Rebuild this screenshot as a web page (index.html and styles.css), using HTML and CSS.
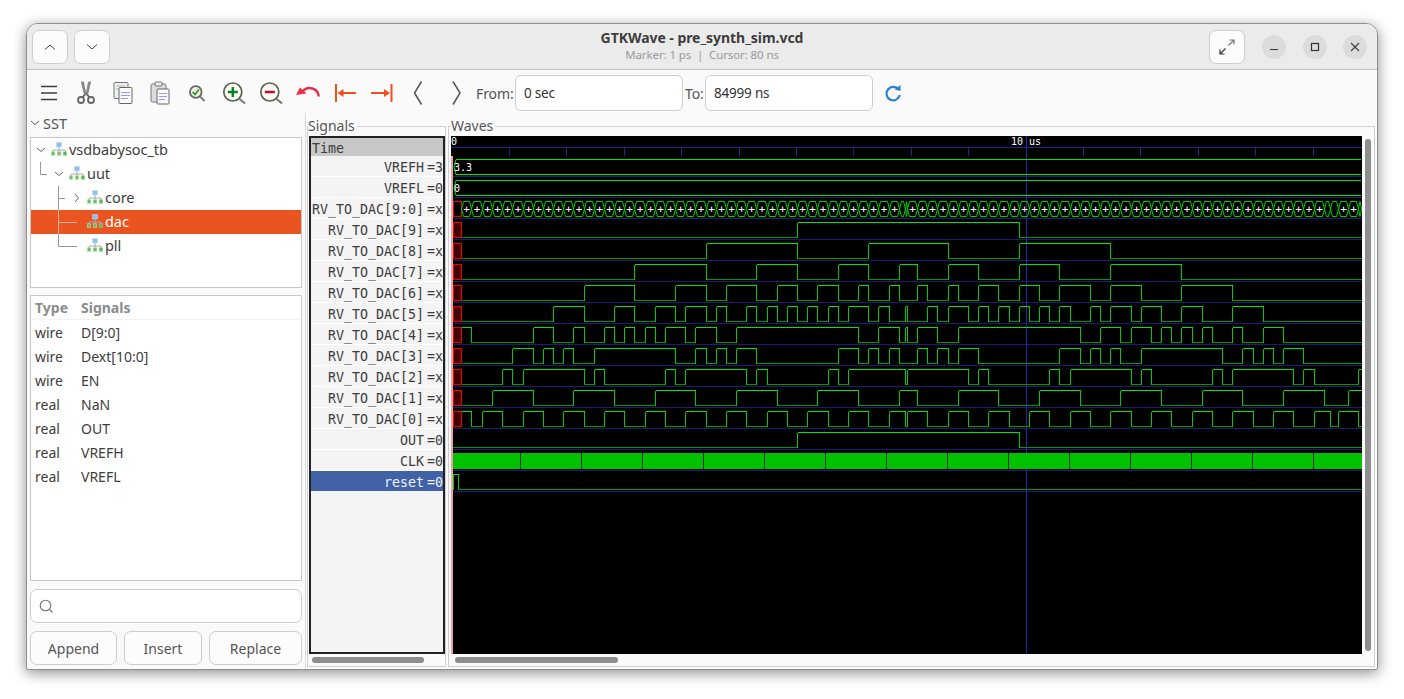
FILE: index.html
```html
<!DOCTYPE html>
<html lang="en">
<head>
  <meta charset="UTF-8" />
  <title>GTKWave - pre_synth_sim.vcd</title>
  <link rel="stylesheet" href="styles.css">
</head>
<body>
<svg class="defs" width="0" height="0">
  <symbol id="hier" viewBox="0 0 16 14">
    <path d="M8 5v3M2 10V8h12v2M8 8v2" stroke="#aaa" fill="none"/>
    <rect x="5.500" y="0.500" width="5" height="4.500" fill="#8fbdf0" stroke="#c4dcf6" stroke-width=".6"/>
    <rect x="0.300" y="9.800" width="3.500" height="3.500" fill="#6cbf64" stroke="#b4dfae" stroke-width=".6"/>
    <rect x="6.300" y="9.800" width="3.500" height="3.500" fill="#6cbf64" stroke="#b4dfae" stroke-width=".6"/>
    <rect x="12.200" y="9.800" width="3.500" height="3.500" fill="#5cb558" stroke="#a4d8a0" stroke-width=".6"/>
  </symbol>
</svg>
<div class="window">
  <div class="titlebar">
    <div class="title-side">
      <button class="head-btn"><svg width="12" height="8" viewBox="0 0 12 8"><path d="M1 6.5l5-4.500 5 4.500" fill="none" stroke="#444"/></svg></button>
      <button class="head-btn"><svg width="12" height="8" viewBox="0 0 12 8"><path d="M1 1.500l5 4.500 5-4.500" fill="none" stroke="#444"/></svg></button>
    </div>
    <div class="title-text">
      <div class="title-main">GTKWave - pre_synth_sim.vcd</div>
      <div class="title-sub">Marker: 1 ps &nbsp;|&nbsp; Cursor: 80 ns</div>
    </div>
    <div class="title-side title-right">
      <button class="head-btn expand-btn"><svg width="16" height="16" viewBox="0 0 16 16"><path d="M9.500 6.500L15 1M10.500 1H15v4.500" fill="none" stroke="#777" stroke-width="1.200"/><path d="M6.500 9.500L1 15M1 10.500V15h4.500" fill="none" stroke="#333" stroke-width="1.200"/></svg></button>
      <div class="win-ctl"><svg width="10" height="10" viewBox="0 0 10 10"><path d="M1 7.500h8" stroke="#333" stroke-width="1.200"/></svg></div>
      <div class="win-ctl"><svg width="10" height="10" viewBox="0 0 10 10"><rect x="1.500" y="1.500" width="7" height="7" fill="none" stroke="#333" stroke-width="1.200"/></svg></div>
      <div class="win-ctl win-close"><svg width="10" height="10" viewBox="0 0 10 10"><path d="M1 1l8 8M9 1l-8 8" stroke="#444" stroke-width="1.200"/></svg></div>
    </div>
  </div>

  <div class="toolbar">
    <div class="tool"><svg width="24" height="24" viewBox="0 0 24 24"><path d="M4 5.500h16M4 12h16M4 18.500h16" stroke="#3d3d3d" stroke-width="1.500"/></svg></div>
    <div class="tool"><svg width="24" height="24" viewBox="0 0 24 24"><path d="M7.500 1l3 13 1.500 0-2.500-13zM16.500 1l-3 13-1.500 0 2.500-13z" fill="#999" stroke="#666" stroke-width=".7"/><path d="M10.500 14L8.500 16.500M13.500 14l2 2.500" stroke="#555" stroke-width="1.800"/><circle cx="7" cy="19" r="3" fill="none" stroke="#666" stroke-width="1.800"/><circle cx="17" cy="19" r="3" fill="none" stroke="#666" stroke-width="1.800"/></svg></div>
    <div class="tool"><svg width="24" height="24" viewBox="0 0 24 24"><rect x="3" y="1.500" width="14" height="16" rx="1" fill="#eee" stroke="#777"/><path d="M5 5h9M5 8h9" stroke="#bbb"/><rect x="8" y="6.500" width="13" height="16" rx="1" fill="#fbfbfb" stroke="#666"/><path d="M10 11.500h9M10 14.500h9M10 17.500h7" stroke="#9a9ae6"/></svg></div>
    <div class="tool"><svg width="24" height="24" viewBox="0 0 24 24"><rect x="3" y="3" width="15" height="18" rx="1.500" fill="#ddd" stroke="#777"/><rect x="7" y="1" width="7" height="4" rx="1" fill="#eee" stroke="#777"/><rect x="9" y="8" width="12" height="15" rx="1" fill="#fbfbfb" stroke="#666"/><path d="M11 12.500h8M11 15.500h8M11 18.500h6" stroke="#9a9ae6"/></svg></div>
    <div class="tool"><svg width="24" height="24" viewBox="0 0 24 24"><circle cx="10.800" cy="11" r="5.800" fill="#eef0e4" stroke="#666" stroke-width="1.800"/><path d="M15 15.500l4.500 4.500" stroke="#777" stroke-width="1.800"/><path d="M7.500 11l2.500 2.500 4-5" fill="none" stroke="#2a9a2a" stroke-width="1.700"/></svg></div>
    <div class="tool"><svg width="24" height="24" viewBox="0 0 24 24"><circle cx="10.800" cy="11" r="9" fill="#fbfbf6" stroke="#5f5f50" stroke-width="1.700"/><path d="M17 17.500l6 5" stroke="#777" stroke-width="2"/><path d="M10.800 6v10M5.800 11h10" stroke="#0a8020" stroke-width="2.400"/></svg></div>
    <div class="tool"><svg width="24" height="24" viewBox="0 0 24 24"><circle cx="10.800" cy="11" r="9" fill="#fbfbf6" stroke="#5f5f50" stroke-width="1.700"/><path d="M17 17.500l6 5" stroke="#777" stroke-width="2"/><path d="M5.800 11h10" stroke="#c0102c" stroke-width="2.400"/></svg></div>
    <div class="tool"><svg width="24" height="24" viewBox="0 0 24 24"><path d="M22.800 15.500A9.200 9.200 0 0 0 6.500 10.500" fill="none" stroke="#e8304a" stroke-width="2.400"/><path d="M0 14l4-7.500 6.500 6z" fill="#e8304a"/></svg></div>
    <div class="tool"><svg width="24" height="24" viewBox="0 0 24 24"><path d="M3 3v18" stroke="#f0501e" stroke-width="2"/><path d="M8 12h15" stroke="#f0501e" stroke-width="2"/><path d="M4.500 12l6-4v8z" fill="#f0501e"/></svg></div>
    <div class="tool"><svg width="24" height="24" viewBox="0 0 24 24"><path d="M21.500 3v18" stroke="#f0501e" stroke-width="2"/><path d="M1 12h15" stroke="#f0501e" stroke-width="2"/><path d="M20 12l-6-4v8z" fill="#f0501e"/></svg></div>
    <div class="tool"><svg width="24" height="24" viewBox="0 0 24 24"><path d="M14.500 .5L7.500 12l7 11.500" fill="none" stroke="#555" stroke-width="1.500"/></svg></div>
    <div class="tool"><svg width="24" height="24" viewBox="0 0 24 24"><path d="M9 .5L16 12 9 23.500" fill="none" stroke="#555" stroke-width="1.500"/></svg></div>
    <span class="range-label from-label">From:</span>
    <div class="range-input">0 sec</div>
    <span class="range-label to-label">To:</span>
    <div class="range-input">84999 ns</div>
    <div class="tool reload"><svg width="24" height="24" viewBox="0 0 24 24"><path d="M17.500 8.500A6.700 6.700 0 1 0 18.800 14" fill="none" stroke="#2a7fd0" stroke-width="2.200"/><path d="M13.500 8.500L19.500 4v6z" fill="#2a7fd0"/></svg></div>
  </div>

  <div class="panes">
    <div class="left-col">
      <div class="sst-head"><svg width="10" height="8" viewBox="0 0 10 8"><path d="M1 2l4 3.500L9 2" fill="none" stroke="#555"/></svg><span>SST</span></div>
      <div class="tree">
        <div class="tree-row">
          <svg class="gutter" width="20" height="24"><path d="M6 10l4 3.500 4-3.500" fill="none" stroke="#666"/></svg>
          <svg class="hier" width="16" height="14"><use href="#hier"/></svg><span>vsdbabysoc_tb</span>
        </div>
        <div class="tree-row">
          <svg class="gutter" width="38" height="24"><path d="M9.500 0v12.500H16" fill="none" stroke="#999"/><path d="M24 10l4 3.500 4-3.500" fill="none" stroke="#666"/></svg>
          <svg class="hier" width="16" height="14"><use href="#hier"/></svg><span>uut</span>
        </div>
        <div class="tree-row">
          <svg class="gutter" width="56" height="24"><path d="M27.500 0v24M27.500 12.500H34" fill="none" stroke="#999"/><path d="M44 8l3.500 4-3.500 4" fill="none" stroke="#666"/></svg>
          <svg class="hier" width="16" height="14"><use href="#hier"/></svg><span>core</span>
        </div>
        <div class="tree-row selected">
          <svg class="gutter" width="56" height="24"><path d="M27.500 0v24M27.500 12.500H46" fill="none" stroke="#f2b49c"/></svg>
          <svg class="hier" width="16" height="14"><use href="#hier"/></svg><span>dac</span>
        </div>
        <div class="tree-row">
          <svg class="gutter" width="56" height="24"><path d="M27.500 0v12.500H46" fill="none" stroke="#999"/></svg>
          <svg class="hier" width="16" height="14"><use href="#hier"/></svg><span>pll</span>
        </div>
      </div>

      <div class="sig-table">
        <div class="sig-table-head"><span>Type</span><span>Signals</span></div>
        <div class="sig-table-row"><span>wire</span><span>D[9:0]</span></div>
        <div class="sig-table-row"><span>wire</span><span>Dext[10:0]</span></div>
        <div class="sig-table-row"><span>wire</span><span>EN</span></div>
        <div class="sig-table-row"><span>real</span><span>NaN</span></div>
        <div class="sig-table-row"><span>real</span><span>OUT</span></div>
        <div class="sig-table-row"><span>real</span><span>VREFH</span></div>
        <div class="sig-table-row"><span>real</span><span>VREFL</span></div>
      </div>

      <div class="search"><svg width="15" height="15" viewBox="0 0 15 15"><circle cx="6.500" cy="6.500" r="5.300" fill="none" stroke="#777" stroke-width="1.100"/><path d="M10.500 10.500l3 3" stroke="#777" stroke-width="1.100"/></svg></div>
      <div class="action-row">
        <button class="action append">Append</button>
        <button class="action insert">Insert</button>
        <button class="action replace">Replace</button>
      </div>
    </div>

    <div class="pane-sep"></div>

    <div class="frame signals-frame">
      <span class="legend">Signals</span>
      <div class="sig-list">
        <div class="sig-time">Time</div>
        <div class="sig-row"><span>VREFH</span><span>=3</span></div>
        <div class="sig-row"><span>VREFL</span><span>=0</span></div>
        <div class="sig-row"><span>RV_TO_DAC[9:0]</span><span>=x</span></div>
        <div class="sig-row"><span>RV_TO_DAC[9]</span><span>=x</span></div>
        <div class="sig-row"><span>RV_TO_DAC[8]</span><span>=x</span></div>
        <div class="sig-row"><span>RV_TO_DAC[7]</span><span>=x</span></div>
        <div class="sig-row"><span>RV_TO_DAC[6]</span><span>=x</span></div>
        <div class="sig-row"><span>RV_TO_DAC[5]</span><span>=x</span></div>
        <div class="sig-row"><span>RV_TO_DAC[4]</span><span>=x</span></div>
        <div class="sig-row"><span>RV_TO_DAC[3]</span><span>=x</span></div>
        <div class="sig-row"><span>RV_TO_DAC[2]</span><span>=x</span></div>
        <div class="sig-row"><span>RV_TO_DAC[1]</span><span>=x</span></div>
        <div class="sig-row"><span>RV_TO_DAC[0]</span><span>=x</span></div>
        <div class="sig-row"><span>OUT</span><span>=0</span></div>
        <div class="sig-row"><span>CLK</span><span>=0</span></div>
        <div class="sig-row active"><span>reset</span><span>=0</span></div>
      </div>
      <div class="hscroll signals-scroll"></div>
    </div>

    <div class="frame waves-frame">
      <span class="legend">Waves</span>
      <div class="waves-main">
        <svg id="waves" class="waves" width="911" height="518" viewBox="451 136 911 518">
          <text class="wave-text" x="451" y="145">0</text>
          <text class="wave-text" x="1011" y="145">10 us</text>
          <text class="wave-text" x="454" y="171">3.3</text>
          <text class="wave-text" x="454" y="192">0</text>
        </svg>
        <div class="vscroll"></div>
      </div>
      <div class="hscroll waves-scroll"></div>
    </div>
  </div>
</div>
<script src="waves.js"></script>
</body>
</html>
```

FILE: styles.css
```css
* {
  box-sizing: border-box;
}
html, body {
  height: 100%;
}
body {
  margin: 0;
  padding: 23px 26px 29px;
  background-color: #fff;
  font-family: 'Noto Sans', sans-serif;
  font-size: 14px;
  color: #3d3d3d;
  overflow: hidden;
}
.defs {
  display: block;
  height: 0;
}
.window {
  display: flex;
  flex-direction: column;
  height: 647px;
  background-color: #fafafa;
  border: 1px solid #8f8f8f;
  border-radius: 12px 12px 2px 2px;
  box-shadow: 0 3px 14px rgba(0, 0, 0, 0.45);
  overflow: hidden;
}
button {
  font-family: inherit;
  color: inherit;
}

/* Title bar */
.titlebar {
  display: flex;
  align-items: center;
  flex: none;
  height: 46px;
  padding: 0 10px 0 5px;
  background-color: #ebebeb;
  border-bottom: 1px solid #c0c0c0;
}
.title-side {
  display: flex;
  align-items: center;
  flex: 1;
  gap: 6px;
}
.title-right {
  justify-content: flex-end;
  gap: 17px;
}
.head-btn {
  display: flex;
  align-items: center;
  justify-content: center;
  width: 36px;
  height: 34px;
  padding: 0;
  background-color: #fcfcfc;
  border: 1px solid #cdcdcd;
  border-radius: 7px;
}
.title-text {
  margin: -2px 0 0 5px;
  text-align: center;
  line-height: 1;
}
.title-main {
  font-size: 14px;
  font-weight: 700;
  letter-spacing: -0.05px;
  margin-bottom: 4px;
}
.title-sub {
  font-size: 11.500px;
  color: #999;
  letter-spacing: -0.1px;
}
.win-ctl {
  display: flex;
  align-items: center;
  justify-content: center;
  width: 24px;
  height: 24px;
  background-color: #dcdcdc;
  border-radius: 50%;
}
.win-close {
  margin-left: -1px;
}

/* Toolbar */
.toolbar {
  display: flex;
  align-items: center;
  flex: none;
  height: 43px;
  padding: 3px 0 0 3px;
  background-color: #fafafa;
}
.tool {
  display: flex;
  align-items: center;
  justify-content: center;
  width: 37px;
  height: 24px;
}
.reload {
  margin-left: 1px;
  width: 38px;
}
.range-label {
  color: #555;
  font-size: 14px;
  letter-spacing: -0.1px;
}
.from-label {
  width: 41px;
  padding-left: 2px;
}
.to-label {
  width: 22px;
  padding-left: 2px;
}
.range-input {
  width: 168px;
  height: 36px;
  padding-left: 8px;
  line-height: 34px;
  font-size: 13.500px;
  letter-spacing: -0.2px;
  color: #333;
  background-color: #fff;
  border: 1px solid #cdcdcd;
  border-radius: 6px;
}

/* Panes */
.panes {
  display: flex;
  flex: 1;
  min-height: 0;
  padding-left: 3px;
}
.left-col {
  display: flex;
  flex-direction: column;
  flex: none;
  width: 272px;
}
.sst-head {
  display: flex;
  align-items: center;
  gap: 3px;
  height: 24px;
  padding-bottom: 4px;
  font-size: 14.500px;
  color: #555;
}
.tree {
  height: 151px;
  background-color: #fff;
  border: 1px solid #c8c8c8;
}
.tree-row {
  display: flex;
  align-items: center;
  height: 24px;
  font-size: 14.500px;
  letter-spacing: -0.05px;
}
.tree-row span {
  margin: -2px 0 0 2px;
}
.tree-row.selected {
  background-color: #e95420;
  color: #fff;
}
.gutter {
  flex: none;
}
.hier {
  flex: none;
  margin-top: -2px;
}
.sig-table {
  height: 286px;
  margin-top: 7px;
  background-color: #fff;
  border: 1px solid #c8c8c8;
}
.sig-table-head, .sig-table-row {
  display: flex;
  align-items: center;
  height: 24px;
  padding-left: 4px;
  font-size: 14px;
}
.sig-table-row span {
  margin-top: -2px;
}
.sig-table-head {
  margin-bottom: 1px;
  font-weight: 700;
  color: #8c8c8c;
  border-bottom: 1px solid #f2f2f2;
}
.sig-table-head span:first-child, .sig-table-row span:first-child {
  width: 46px;
}
.search {
  display: flex;
  align-items: center;
  height: 34px;
  margin-top: 8px;
  padding-left: 8px;
  background-color: #fff;
  border: 1px solid #cdcdcd;
  border-radius: 7px;
}
.action-row {
  display: flex;
  gap: 7px;
  margin-top: 8px;
}
.action {
  height: 34px;
  padding: 0;
  font-size: 14px;
  color: #555;
  background-color: #fcfcfc;
  border: 1px solid #cdcdcd;
  border-radius: 7px;
}
.append {
  width: 87px;
}
.insert {
  width: 78px;
}
.replace {
  width: 93px;
}
.pane-sep {
  flex: none;
  width: 1px;
  margin: 0 1px 0 3px;
  background-color: #dcdcdc;
}

/* Signal and wave frames */
.frame {
  position: relative;
  flex: none;
  height: 541px;
  margin-top: 13px;
  padding-top: 9px;
  border: 1px solid #cfcfcf;
}
.legend {
  position: absolute;
  top: -10px;
  left: 0;
  padding-right: 2px;
  font-size: 14px;
  line-height: 18px;
  color: #555;
  background-color: #fafafa;
}
.signals-frame {
  width: 139px;
  padding-left: 1px;
}
.waves-frame {
  width: 927px;
  margin-left: 2px;
  padding-left: 2px;
}
.waves-frame .legend {
  left: 2px;
}
.sig-list {
  width: 136px;
  height: 518px;
  background-color: #f4f4f4;
  border: 2px solid #222;
  font-family: 'DejaVu Sans Mono', monospace;
  font-size: 13.300px;
}
.sig-time {
  height: 18px;
  padding-left: 1px;
  line-height: 21px;
  background-color: #c8c8c8;
}
.sig-row {
  display: flex;
  justify-content: flex-end;
  align-items: center;
  gap: 3px;
  height: 21px;
  padding-top: 2px;
  border-bottom: 1px solid #fff;
}
.sig-row.active {
  background-color: #4262a8;
  color: #eef2ff;
  border-bottom-color: #f4f4f4;
}
.waves-main {
  display: flex;
  height: 518px;
}
.waves {
  display: block;
  flex: none;
  background-color: #000;
}
.wave-text {
  font-family: 'DejaVu Sans Mono', monospace;
  font-size: 10px;
  fill: #fff;
}
.wave-plus {
  font-family: 'DejaVu Sans Mono', monospace;
  font-size: 11px;
  fill: #fff;
  text-anchor: middle;
}
.vscroll {
  width: 6px;
  height: 512px;
  margin: 3px 0 0 3px;
  background-color: #8e8e8e;
  border-radius: 3px;
}
.hscroll {
  height: 6px;
  margin-top: 3px;
  background-color: #8e8e8e;
  border-radius: 3px;
}
.signals-scroll {
  width: 112px;
  margin-left: 3px;
}
.waves-scroll {
  width: 163px;
  margin-left: 4px;
}
```

FILE: waves.js
```js
// draws the trace rows into the black wave area, coordinates are page pixels
const svg = document.getElementById('waves');
const NS = 'http://www.w3.org/2000/svg';
const LEFT = 453;
const RIGHT = 1361;
const ROW_TOP = 159;
const ROW_PITCH = 21;

const bits = [
  { row: 3, high: false, t: [797, 1019] },
  { row: 4, high: false, t: [706, 797, 868, 948, 1019, 1110] },
  { row: 5, high: false, t: [634, 706, 756, 797, 838, 868, 899, 917, 948, 978, 1019, 1059, 1110, 1181] },
  { row: 6, high: false, t: [584, 634, 675, 706, 726, 756, 777, 797, 817, 838, 858, 868, 889, 899, 917, 927, 948, 958, 978, 998, 1019, 1039, 1059, 1090, 1110, 1141, 1181, 1232] },
  { row: 7, high: false, t: [553, 584, 614, 634, 655, 675, 685, 706, 716, 726, 746, 756, 767, 777, 787, 797, 807, 817, 828, 838, 848, 868, 878, 889, 905, 907, 927, 937, 948, 968, 978, 988, 998, 1009, 1019, 1029, 1039, 1049, 1059, 1070, 1090, 1100, 1110, 1131, 1141, 1161, 1181, 1202, 1232, 1263] },
  { row: 8, high: true, t: [471, 533, 553, 573, 584, 604, 614, 624, 634, 645, 655, 665, 685, 695, 716, 736, 858, 878, 899, 905, 907, 917, 937, 958, 1080, 1100, 1120, 1131, 1151, 1161, 1171, 1181, 1192, 1202, 1212, 1232, 1242, 1263, 1283] },
  { row: 9, high: false, t: [512, 533, 543, 553, 563, 573, 594, 675, 695, 706, 716, 726, 736, 756, 838, 858, 868, 878, 889, 899, 917, 927, 937, 948, 958, 978, 1059, 1080, 1090, 1100, 1110, 1120, 1141, 1222, 1242, 1253, 1263, 1273, 1283, 1303] },
  { row: 10, high: false, t: [502, 512, 523, 584, 594, 604, 665, 675, 685, 746, 756, 767, 828, 838, 848, 905, 907, 968, 978, 988, 1049, 1059, 1070, 1131, 1141, 1151, 1212, 1222, 1232, 1293, 1303, 1314, 1358] },
  { row: 11, high: false, t: [492, 533, 573, 614, 655, 695, 736, 777, 817, 858, 899, 917, 958, 998, 1039, 1080, 1120, 1161, 1202, 1242, 1283, 1324, 1348] },
  { row: 12, high: true, t: [471, 482, 502, 523, 543, 563, 584, 604, 624, 645, 665, 685, 706, 726, 746, 767, 787, 807, 828, 848, 868, 889, 905, 907, 927, 948, 968, 988, 1009, 1029, 1049, 1070, 1090, 1110, 1131, 1151, 1171, 1192, 1212, 1232, 1253, 1273, 1293, 1314, 1330, 1338, 1358] }
];

function add(tag, attrs, text) {
  const el = document.createElementNS(NS, tag);
  Object.keys(attrs).forEach(k => el.setAttribute(k, attrs[k]));
  if (text) el.textContent = text;
  svg.appendChild(el);
  return el;
}

function hiY(row) { return ROW_TOP + row * ROW_PITCH + 0.5; }
function loY(row) { return hiY(row) + 15; }

// one single-bit trace, bright while high and dim while low
function drawBit(row, startX, startHigh, times) {
  let hi = '', lo = '', rise = '';
  let x = startX, high = startHigh;
  times.concat([RIGHT]).forEach((t, i) => {
    const end = t + 0.5;
    if (high) hi += `M${x} ${hiY(row)}H${end}`;
    else lo += `M${x} ${loY(row)}H${end}`;
    if (i < times.length) rise += `M${end} ${hiY(row)}V${loY(row)}`;
    x = end;
    high = !high;
  });
  add('path', { d: lo, stroke: '#009a00', fill: 'none', 'shape-rendering': 'crispEdges' });
  add('path', { d: rise, stroke: '#00c800', fill: 'none', 'shape-rendering': 'crispEdges' });
  add('path', { d: hi, stroke: '#00e600', fill: 'none', 'shape-rendering': 'crispEdges' });
}

function xBox(row, fill) {
  add('rect', { x: 453.5, y: hiY(row), width: 8, height: 15, fill: fill, stroke: '#f00000', 'shape-rendering': 'crispEdges' });
}

// row dividers
for (let r = 0; r < 16; r++) {
  add('path', { d: `M${LEFT} ${loY(r) + 2}H1362`, stroke: '#1c1c78', 'shape-rendering': 'crispEdges' });
}

// time ruler
add('path', { d: 'M451 147.500H1362', stroke: '#24248c', 'shape-rendering': 'crispEdges' });
for (let i = 1; i <= 15; i++) {
  const x = Math.floor(452 + 57.4 * i) + 0.5;
  add('path', { d: `M${x} 148V156`, stroke: '#24248c', 'shape-rendering': 'crispEdges' });
}

// cursor and marker go under the traces
add('rect', { x: 1026, y: 136, width: 1, height: 518, fill: '#2626a6' });
add('rect', { x: 451, y: 156, width: 2, height: 498, fill: '#f0a0a0' });

// real valued rows
[0, 1].forEach(r => {
  const mid = hiY(r) + 7.5;
  add('path', { d: `M${RIGHT} ${hiY(r)}H456L454 ${mid}L456 ${loY(r)}H${RIGHT}`, stroke: '#00e600', fill: 'none' });
});
svg.appendChild(svg.querySelectorAll('text')[2]);
svg.appendChild(svg.querySelectorAll('text')[2]);

// bus row, one hexagon for every change of any bit
const changes = new Set();
bits.forEach(b => b.t.forEach(t => changes.add(t)));
const edges = [461].concat(Array.from(changes).sort((a, b) => a - b), [RIGHT]);
const busTop = hiY(2), busBot = loY(2), busMid = busTop + 7.5;
xBox(2, '#000');
for (let i = 0; i < edges.length - 1; i++) {
  const a = edges[i] + 0.5, b = edges[i + 1] + 0.5;
  const w = b - a;
  const s = Math.min(2, w / 2);
  add('path', {
    d: `M${a} ${busMid}L${a + s} ${busTop}H${b - s}L${b} ${busMid}L${b - s} ${busBot}H${a + s}Z`,
    stroke: '#00d000', fill: 'none'
  });
  if (w >= 9) add('text', { class: 'wave-plus', x: a + w / 2, y: busMid + 4 }, '+');
}

// single bit rows
bits.forEach(b => {
  drawBit(b.row, 461.5, b.high, b.t);
  xBox(b.row, '#400000');
});
drawBit(13, LEFT, false, [797, 1019]);

// clock is too fast to resolve, a solid bar with a gap now and then
add('rect', { x: LEFT, y: hiY(14) - 0.5, width: 909, height: 16, fill: '#00c000' });
for (let x = 520; x < 1362; x += 61) {
  add('rect', { x: x, y: hiY(14) - 0.5, width: 1, height: 16, fill: '#003000' });
}

drawBit(15, LEFT, true, [458]);
add('path', { d: `M453.500 ${hiY(15)}V${loY(15)}`, stroke: '#00c800', 'shape-rendering': 'crispEdges' });
```
